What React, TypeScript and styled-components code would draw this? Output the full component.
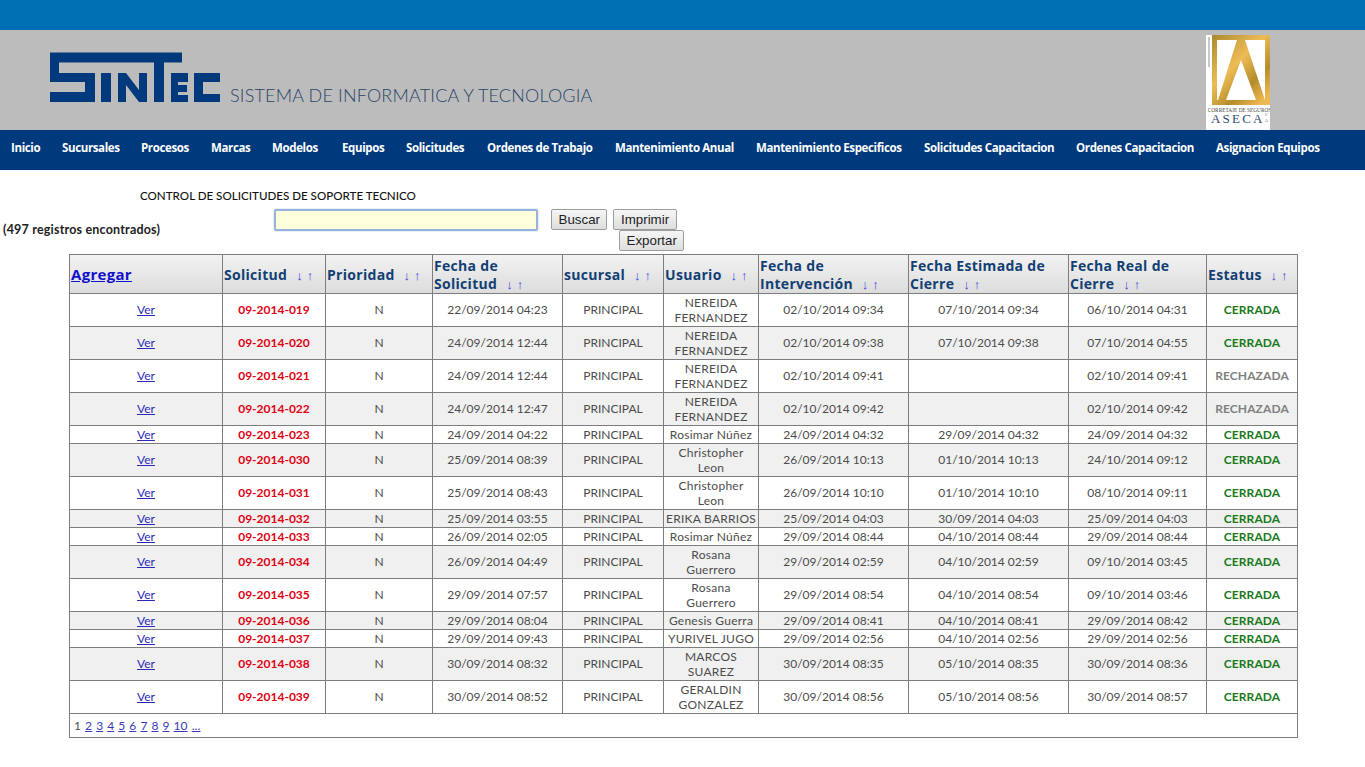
import React from 'react';
import styled, { createGlobalStyle } from 'styled-components';

const Global = createGlobalStyle`
  html, body { margin: 0; padding: 0; background: #fff; }
  body { font-family: "Lato", "Open Sans", sans-serif; }
`;

const TopBar = styled.div`height: 30px; background: #0070b5;`;
const Banner = styled.header`
  height: 100px; background: #bcbcbc; display: flex; align-items: flex-start;
  padding-left: 50px; padding-right: 95px;
`;
const Logo = styled.svg`width: 171px; height: 51px; margin-top: 22px; flex: none;`;
const Tagline = styled.div`
  font-family: "Lato", sans-serif; font-weight: 300; font-size: 18px; color: #2a4468;
  margin: 54px 0 0 9px; white-space: nowrap; letter-spacing: 0.17px; flex: 1;
`;
const Aseca = styled.svg`width: 64px; height: 95px; margin-top: 5px; flex: none;`;
const Nav = styled.nav`
  height: 40px; background: #003a7c; display: flex; align-items: center; padding-left: 11px;
`;
const NavItem = styled.a<{ $w: number }>`
  width: ${p => p.$w}px; flex: none; color: #fff; font: 700 11.5px "Open Sans", sans-serif;
  white-space: nowrap; margin-top: -6px; letter-spacing: -0.37px;
`;
const Controls = styled.section`
  height: 84px; font-family: "Lato", sans-serif; color: #111;
`;
const Title = styled.div`
  padding: 18px 0 0 140px; font-size: 11.6px; font-weight: 500; line-height: 15px;
`;
const SearchRow = styled.div`display: flex; align-items: flex-start; padding: 6px 0 0 3px;`;
const Found = styled.div`
  width: 271px; flex: none; font-size: 12.5px; font-weight: 700; padding-top: 13px; line-height: 15px;
  color: #222; letter-spacing: 0.2px;
`;
const Search = styled.input`
  width: 264px; height: 22px; box-sizing: border-box; background: #ffffdc; border: 2px solid #98b4dc;
  border-radius: 2px; margin: 0; outline: none; box-shadow: 0 0 2px #a9c0e2;
`;
const Buttons = styled.div`display: flex; flex-direction: column; align-items: flex-start; padding-left: 13px;`;
const BtnLine = styled.div`display: flex; gap: 6px;`;
const Btn = styled.button`
  height: 21px; padding: 0 6.5px; font: 400 13.33px "Liberation Sans", sans-serif; color: #222;
  background: linear-gradient(#f6f6f6, #dedede); border: 1px solid #9d9d9d; border-radius: 2px;
  margin: 0; line-height: 17px;
`;
const ExportBtn = styled(Btn)`margin-left: 68px;`;

const Table = styled.table`
  border-collapse: collapse; table-layout: fixed; width: 1229px; margin-left: 69px;
  font-family: "Lato", sans-serif; font-size: 12px; color: #4c4c4c;
  border: 1px solid #7d7d7d;
  td, th { border: 1px solid #7d7d7d; padding: 0 1px; }
`;
const Head = styled.tr`
  height: 39px; background: linear-gradient(#f2f2f2, #dcdcdc);
`;
const Th = styled.th`
  text-align: left; font: 700 14px/18px "Open Sans", sans-serif; color: #123f74; letter-spacing: 0.3px;
  && { padding-top: 2px; }
`;
const AddLink = styled.a`color: #1212cc; text-decoration: underline; font-size: 15px; line-height: 1;`;
const Sort = styled.span`
  color: #4444dd; font-weight: 400; font-size: 13px; margin-left: 5px; letter-spacing: 4px;
  font-family: "Liberation Sans", sans-serif; line-height: 1;
`;
const Row = styled.tr<{ $tall: boolean; $alt: boolean }>`
  height: ${p => (p.$tall ? 33 : 18)}px;
  background: ${p => (p.$alt ? '#f0f0f0' : '#fff')};
  td { text-align: center; line-height: 15px; padding-bottom: ${p => (p.$tall ? 2 : 0)}px; }
`;
const UserCell = styled.td`
  white-space: pre-line; letter-spacing: 0.25px;
  && { padding-bottom: 0; }
`;
const VerLink = styled.a`color: #2a2ab8; text-decoration: underline;`;
const Code = styled.td`color: #e00012; font-weight: 700;`;
const Status = styled.td<{ $s: string }>`
  font-weight: 700; letter-spacing: 0.1px;
  color: ${p => (p.$s === 'CERRADA' ? '#1a7a1a' : '#808080')};
`;
const Pager = styled.tr`height: 24px;`;
const PagerCell = styled.td`text-align: left; && { padding-left: 4px; } letter-spacing: 0.1px;`;
const PageLink = styled.a`color: #3a3ab8; text-decoration: underline; margin-left: 4px;`;

const cols = [153, 103, 107, 130, 101, 95, 150, 160, 138, 91];
const N = 'NEREIDA\nFERNANDEZ';
const CL = 'Christopher\nLeon';
const RG = 'Rosana\nGuerrero';
type R = [string, string, string, string, string, string, string, string];
const rows: R[] = [
  ['019', '22/09/2014 04:23', N, '02/10/2014 09:34', '07/10/2014 09:34', '06/10/2014 04:31', 'CERRADA', 't'],
  ['020', '24/09/2014 12:44', N, '02/10/2014 09:38', '07/10/2014 09:38', '07/10/2014 04:55', 'CERRADA', 't'],
  ['021', '24/09/2014 12:44', N, '02/10/2014 09:41', '', '02/10/2014 09:41', 'RECHAZADA', 't'],
  ['022', '24/09/2014 12:47', N, '02/10/2014 09:42', '', '02/10/2014 09:42', 'RECHAZADA', 't'],
  ['023', '24/09/2014 04:22', 'Rosimar Núñez', '24/09/2014 04:32', '29/09/2014 04:32', '24/09/2014 04:32', 'CERRADA', ''],
  ['030', '25/09/2014 08:39', CL, '26/09/2014 10:13', '01/10/2014 10:13', '24/10/2014 09:12', 'CERRADA', 't'],
  ['031', '25/09/2014 08:43', CL, '26/09/2014 10:10', '01/10/2014 10:10', '08/10/2014 09:11', 'CERRADA', 't'],
  ['032', '25/09/2014 03:55', 'ERIKA BARRIOS', '25/09/2014 04:03', '30/09/2014 04:03', '25/09/2014 04:03', 'CERRADA', ''],
  ['033', '26/09/2014 02:05', 'Rosimar Núñez', '29/09/2014 08:44', '04/10/2014 08:44', '29/09/2014 08:44', 'CERRADA', ''],
  ['034', '26/09/2014 04:49', RG, '29/09/2014 02:59', '04/10/2014 02:59', '09/10/2014 03:45', 'CERRADA', 't'],
  ['035', '29/09/2014 07:57', RG, '29/09/2014 08:54', '04/10/2014 08:54', '09/10/2014 03:46', 'CERRADA', 't'],
  ['036', '29/09/2014 08:04', 'Genesis Guerra', '29/09/2014 08:41', '04/10/2014 08:41', '29/09/2014 08:42', 'CERRADA', ''],
  ['037', '29/09/2014 09:43', 'YURIVEL JUGO', '29/09/2014 02:56', '04/10/2014 02:56', '29/09/2014 02:56', 'CERRADA', ''],
  ['038', '30/09/2014 08:32', 'MARCOS\nSUAREZ', '30/09/2014 08:35', '05/10/2014 08:35', '30/09/2014 08:36', 'CERRADA', 't'],
  ['039', '30/09/2014 08:52', 'GERALDIN\nGONZALEZ', '30/09/2014 08:56', '05/10/2014 08:56', '30/09/2014 08:57', 'CERRADA', 't'],
];
const nav: [string, number][] = [
  ['Inicio', 51], ['Sucursales', 79], ['Procesos', 70], ['Marcas', 61], ['Modelos', 70], ['Equipos', 64],
  ['Solicitudes', 81], ['Ordenes de Trabajo', 128], ['Mantenimiento Anual', 141], ['Mantenimiento Especificos', 168],
  ['Solicitudes Capacitacion', 152], ['Ordenes Capacitacion', 140], ['Asignacion Equipos', 120],
];
const S = () => <Sort>↓↑</Sort>;

export default function App() {
  return (
    <>
      <Global />
      <TopBar />
      <Banner>
        <Logo viewBox="0 0 171 51">
          <g fill="#003a7c">
            <path d="M0 0.5H132V10.5H114V50H104V10.5H9V21H45V50H0V40H35V30H0Z" />
            <path d="M51 21H61V50H51Z" />
            <path d="M68 21H76L89 38V21H97V50H89L76 33V50H68Z" />
            <path d="M121 21H138V30H128V33H137V40H128V43H138V50H121Z" />
            <path d="M144 21H170V30H153V42H170V50H144Z" />
          </g>
        </Logo>
        <Tagline>SISTEMA DE INFORMATICA Y TECNOLOGIA</Tagline>
        <Aseca viewBox="0 0 64 95">
          <defs>
            <linearGradient id="gold" x1="0" y1="0" x2="0.8" y2="1">
              <stop offset="0" stopColor="#a88a30" />
              <stop offset="0.45" stopColor="#eebc55" />
              <stop offset="0.75" stopColor="#b58c2c" />
              <stop offset="1" stopColor="#eeb850" />
            </linearGradient>
          </defs>
          <rect width="64" height="95" fill="#fff" />
          <path fill="url(#gold)" fillRule="evenodd" d="M6 0H64V70H6ZM11 5V65H12L31 5ZM39 5L59 65V5ZM35 25L20 65H50Z" />
          <rect x="2" y="2" width="2" height="30" fill="#c8c8c8" />
          <text x="33.5" y="77" textAnchor="middle" fontFamily="Liberation Serif, serif" fontSize="5.3" fill="#444">CORRETAJE DE SEGUROS</text>
          <text x="5" y="88" fontFamily="Liberation Serif, serif" fontSize="13" letterSpacing="2.2" fill="#2f4a70">ASECA</text>
          <text x="59" y="81" fontFamily="Liberation Serif, serif" fontSize="4" fill="#2f4a70">C</text>
          <text x="59" y="87" fontFamily="Liberation Serif, serif" fontSize="4" fill="#2f4a70">A</text>
        </Aseca>
      </Banner>
      <Nav>
        {nav.map(([t, w]) => <NavItem key={t} $w={w}>{t}</NavItem>)}
      </Nav>
      <Controls>
        <Title>CONTROL DE SOLICITUDES DE SOPORTE TECNICO</Title>
        <SearchRow>
          <Found>(497 registros encontrados)</Found>
          <Search />
          <Buttons>
            <BtnLine><Btn>Buscar</Btn><Btn>Imprimir</Btn></BtnLine>
            <ExportBtn>Exportar</ExportBtn>
          </Buttons>
        </SearchRow>
      </Controls>
      <Table>
        <colgroup>{cols.map((c, i) => <col key={i} style={{ width: c }} />)}</colgroup>
        <thead>
          <Head>
            <Th><AddLink>Agregar</AddLink></Th>
            <Th>Solicitud <S /></Th>
            <Th>Prioridad <S /></Th>
            <Th>Fecha de Solicitud <S /></Th>
            <Th>sucursal <S /></Th>
            <Th>Usuario <S /></Th>
            <Th>Fecha de Intervención <S /></Th>
            <Th>Fecha Estimada de Cierre <S /></Th>
            <Th>Fecha Real de Cierre <S /></Th>
            <Th>Estatus <S /></Th>
          </Head>
        </thead>
        <tbody>
          {rows.map((r, i) => (
            <Row key={r[0]} $tall={r[7] === 't'} $alt={i % 2 === 1}>
              <td><VerLink>Ver</VerLink></td>
              <Code>09-2014-{r[0]}</Code>
              <td>N</td>
              <td>{r[1]}</td>
              <td>PRINCIPAL</td>
              <UserCell>{r[2]}</UserCell>
              <td>{r[3]}</td>
              <td>{r[4]}</td>
              <td>{r[5]}</td>
              <Status $s={r[6]}>{r[6]}</Status>
            </Row>
          ))}
          <Pager>
            <PagerCell colSpan={10}>
              1{[2, 3, 4, 5, 6, 7, 8, 9, 10].map(n => <PageLink key={n}>{n}</PageLink>)}<PageLink>...</PageLink>
            </PagerCell>
          </Pager>
        </tbody>
      </Table>
    </>
  );
}
